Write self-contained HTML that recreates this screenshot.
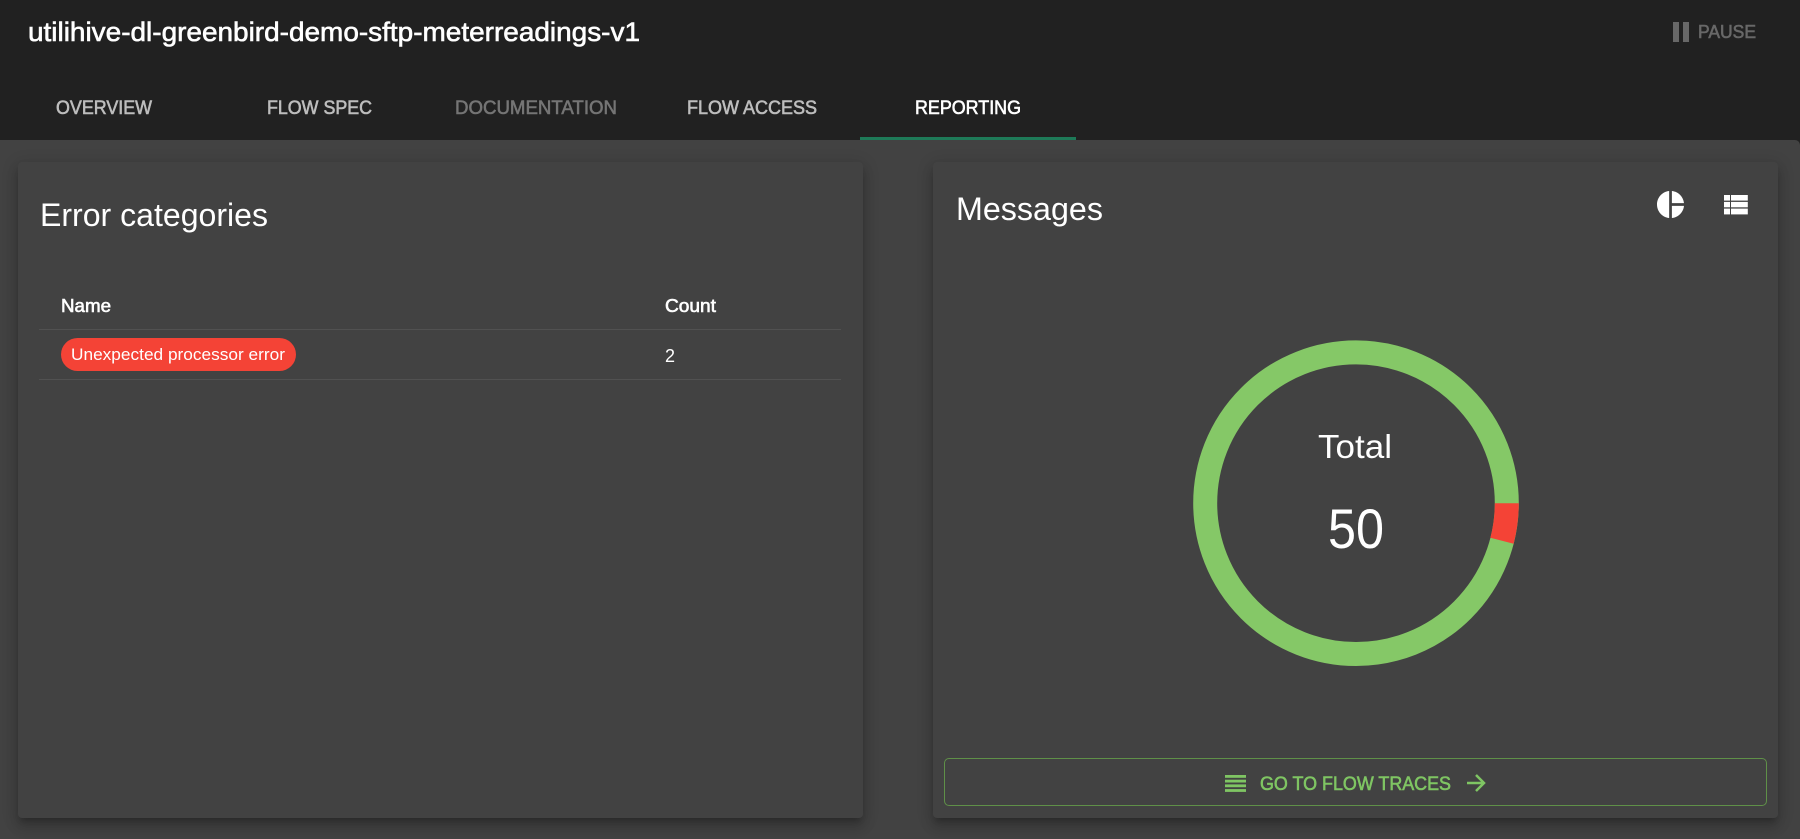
<!DOCTYPE html>
<html><head><meta charset="utf-8"><title>Reporting</title>
<style>
html,body{margin:0;padding:0;width:1800px;height:839px;overflow:hidden;background:#212121}
.content{position:absolute;left:0;top:140px;width:1800px;height:699px;background:#424242;border-top-right-radius:5px}
.hdr{position:absolute;left:0;top:0;width:1800px;height:140px;background:#212121}
.ink{position:absolute;left:860px;top:137px;width:216px;height:3px;background:#1e7a58}
.card{position:absolute;top:162px;width:845px;height:656px;background:#424242;border-radius:4px;box-shadow:0 5px 6px -3px rgba(0,0,0,.2),0 9px 12px 1px rgba(0,0,0,.14),0 3px 16px 2px rgba(0,0,0,.12)}
.line{position:absolute;left:39px;width:802px;height:1px;background:#515151}
.chip{position:absolute;left:61px;top:338px;width:235px;height:33px;border-radius:17px;background:#f44336}
.btn{position:absolute;left:944px;top:758px;width:821px;height:46px;border:1.5px solid #5f9048;border-radius:5px}
svg{position:absolute;left:0;top:0}
text{font-family:"Liberation Sans",sans-serif}
.m{stroke:currentColor;stroke-width:.6px}
</style></head><body>
<div class="hdr"></div><div class="content"></div><div class="ink"></div>
<div class="card" style="left:18px"></div>
<div class="card" style="left:933px"></div>
<div class="line" style="top:329px"></div>
<div class="line" style="top:379px"></div>
<div class="chip"></div>
<div class="btn"></div>
<svg width="1800" height="839" viewBox="0 0 1800 839">
<g fill="#fff" color="#fff">
<text class="m" x="28" y="41" font-size="27" textLength="612" lengthAdjust="spacingAndGlyphs">utilihive-dl-greenbird-demo-sftp-meterreadings-v1</text>
<text x="40" y="226" font-size="32" textLength="228" lengthAdjust="spacingAndGlyphs">Error categories</text>
<text x="956" y="220" font-size="32" textLength="147" lengthAdjust="spacingAndGlyphs">Messages</text>
<text class="m" x="61" y="312" font-size="18" textLength="50" lengthAdjust="spacingAndGlyphs">Name</text>
<text class="m" x="665" y="312" font-size="18" textLength="51" lengthAdjust="spacingAndGlyphs">Count</text>
<text x="71" y="360" font-size="16.5" textLength="214" lengthAdjust="spacingAndGlyphs">Unexpected processor error</text>
<text x="665" y="362" font-size="18" textLength="10" lengthAdjust="spacingAndGlyphs">2</text>
<text x="1318" y="458" font-size="33" textLength="74" lengthAdjust="spacingAndGlyphs">Total</text>
<text x="1328" y="548" font-size="56" textLength="56" lengthAdjust="spacingAndGlyphs">50</text>
<text class="m" x="915" y="114" font-size="19" textLength="106" lengthAdjust="spacingAndGlyphs">REPORTING</text>
</g>
<g fill="#bdbdbd" color="#bdbdbd">
<text class="m" x="56" y="114" font-size="19" textLength="96" lengthAdjust="spacingAndGlyphs">OVERVIEW</text>
<text class="m" x="267" y="114" font-size="19" textLength="105" lengthAdjust="spacingAndGlyphs">FLOW SPEC</text>
<text class="m" x="687" y="114" font-size="19" textLength="130" lengthAdjust="spacingAndGlyphs">FLOW ACCESS</text>
</g>
<text class="m" x="455" y="114" font-size="19" textLength="162" lengthAdjust="spacingAndGlyphs" fill="#757575" color="#757575">DOCUMENTATION</text>
<text class="m" x="1698" y="38" font-size="18" textLength="58" lengthAdjust="spacingAndGlyphs" fill="#686868" color="#686868">PAUSE</text>
<rect x="1673" y="22" width="6" height="20" fill="#686868"/><rect x="1683" y="22" width="6" height="20" fill="#686868"/>

<path transform="translate(1654.3 188.3) scale(1.35)" fill="#fff" d="M11 2v20c-5.07-.5-9-4.79-9-10s3.93-9.5 9-10zm2.03 0v8.99H22c-.47-4.74-4.24-8.52-8.97-8.99zm0 11.01V22c4.74-.47 8.5-4.25 8.97-8.99h-8.97z"/>
<g fill="#fff">
<rect x="1724" y="195" width="6" height="5.6"/><rect x="1731" y="195" width="16.8" height="5.6"/>
<rect x="1724" y="201.9" width="6" height="5.4"/><rect x="1731" y="201.9" width="16.8" height="5.4"/>
<rect x="1724" y="208.6" width="6" height="5.8"/><rect x="1731" y="208.6" width="16.8" height="5.8"/>
</g>

<circle cx="1356" cy="503.2" r="150.8" fill="none" stroke="#85c867" stroke-width="24"/>
<path d="M1506.8 503.2A150.8 150.8 0 0 1 1502 540.8" fill="none" stroke="#f44336" stroke-width="24"/>

<g fill="#7fc563">
<rect x="1225" y="775" width="21" height="2.8"/><rect x="1225" y="779.7" width="21" height="2.8"/><rect x="1225" y="784.4" width="21" height="2.8"/><rect x="1225" y="789.1" width="21" height="2.8"/>
</g>
<text class="m" x="1260" y="790" font-size="19" textLength="191" lengthAdjust="spacingAndGlyphs" fill="#7fc563" color="#7fc563">GO TO FLOW TRACES</text>
<path d="M1467 783h16M1476 775l8 8-8 8" fill="none" stroke="#7fc563" stroke-width="2.5"/>
</svg>
</body></html>
